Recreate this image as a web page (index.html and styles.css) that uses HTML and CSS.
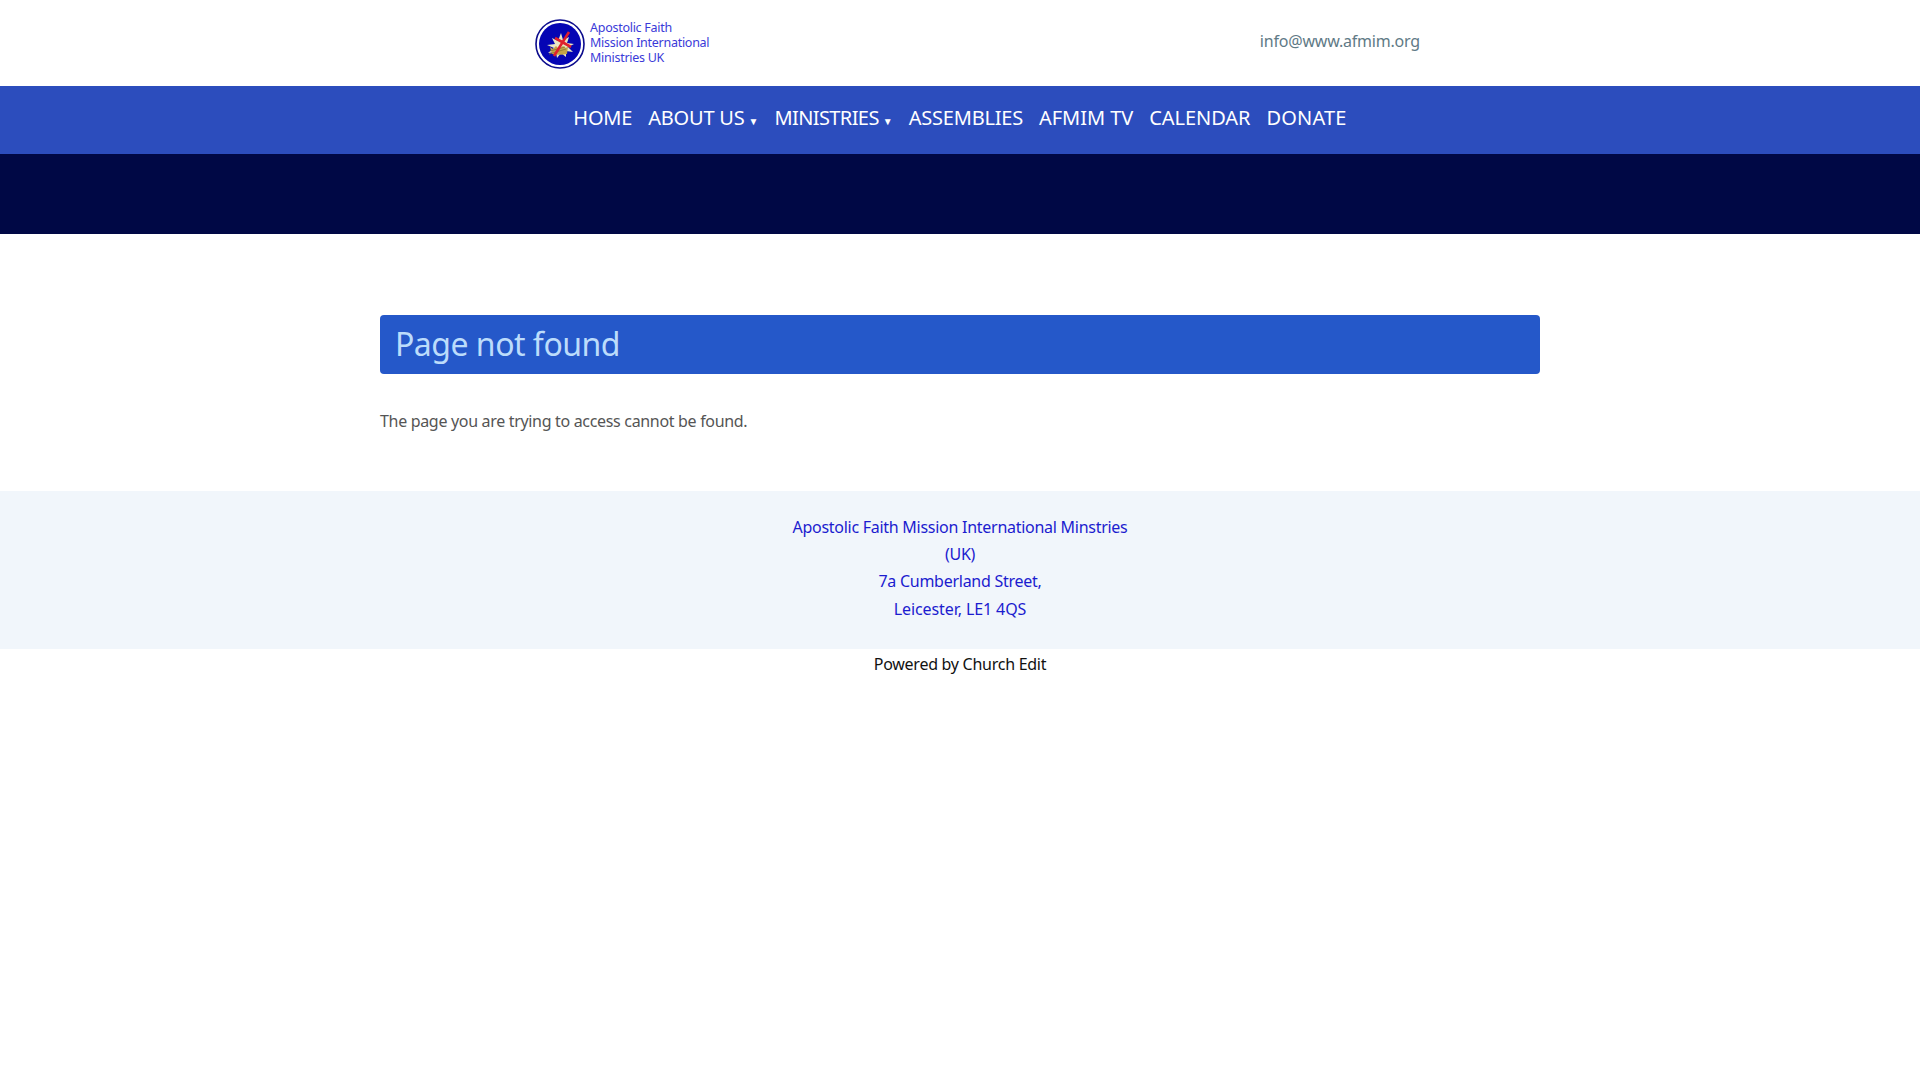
FILE: index.html
```html
<!DOCTYPE html>
<html lang="en">
<head>
<meta charset="utf-8">
<title>Page not found</title>
<link rel="stylesheet" href="styles.css">
</head>
<body>
<header class="top">
  <div class="top-inner">
    <a class="logo" href="#">
      <svg class="logo-mark" width="50" height="50" viewBox="0 0 50 50" aria-hidden="true">
        <circle cx="25" cy="25" r="24" fill="#fff" stroke="#0b0b8c" stroke-width="1.6"/>
        <circle cx="25" cy="25" r="21" fill="#0505b4"/>
        <path d="M26 14l2 7 6-3-2 6 7 1-6 3 5 5-7-1 0 6-5-4-4 5-1-6-8 1 6-5-7-3 8-1-3-6 6 3z" fill="#e9e8c4"/>
        <path d="M15 28l3 2 3-3 3 3 4-3 3 2 2-2-1 8c-4 1-12 1-15 0z" fill="#c4a548"/>
        <path d="M14 35L31 30M15 32l15-4" stroke="#8c7430" stroke-width="0.8" fill="none"/>
        <path d="M19 37L34 13" stroke="#e0202c" stroke-width="2.6" fill="none"/>
        <path d="M20 19L36 28" stroke="#e0202c" stroke-width="2.6" fill="none"/>
      </svg>
      <span class="logo-text">Apostolic Faith<br>Mission International<br>Ministries UK</span>
    </a>
    <a class="mail" href="#">info@www.afmim.org</a>
  </div>
</header>
<nav class="nav">
  <a href="#">HOME</a>
  <a href="#">ABOUT US<span class="caret">▼</span></a>
  <a class="tight" href="#">MINISTRIES<span class="caret">▼</span></a>
  <a href="#">ASSEMBLIES</a>
  <a class="loose" href="#">AFMIM TV</a>
  <a class="loose" href="#">CALENDAR</a>
  <a class="wide" href="#">DONATE</a>
</nav>
<div class="band"></div>
<main class="content">
  <h1 class="title">Page not found</h1>
  <p class="msg">The page you are trying to access cannot be found.</p>
</main>
<footer class="foot">
  <div class="foot-text">Apostolic Faith Mission International Minstries<br>(UK)<br>7a Cumberland Street,<br><span class="foot-last">Leicester, LE1 4QS</span></div>
</footer>
<div class="powered">Powered by Church Edit</div>
</body>
</html>
```
FILE: styles.css
```css
* { box-sizing: border-box; }
html, body { margin: 0; padding: 0; background: #fff; }
body { font-family: "Noto Sans", "Open Sans", sans-serif; font-size: 16px; line-height: 27.2px; color: #555; }
a { color: inherit; text-decoration: none; }
.top { height: 86px; }
.top-inner { width: 900px; margin-left: 520px; display: flex; justify-content: space-between; align-items: flex-start; padding: 0 0 0 15px; }
.logo { display: flex; gap: 5px; margin-top: 19px; }
.logo-mark { display: block; }
.logo-text { font-size: 12.5px; line-height: 15px; color: #3a3ad8; letter-spacing: -0.27px; padding-top: 1px; }
.mail { color: #5f7a86; margin-top: 27px; font-size: 16px; line-height: 27px; letter-spacing: -0.2px; padding-top: 1px; }
.nav { height: 68px; background: #2c4dbd; display: flex; justify-content: center; gap: 16px; padding-top: 18px; color: #fff; font-size: 20px; line-height: 27px; letter-spacing: -0.2px; }
.nav .tight { letter-spacing: -0.6px; }
.nav .loose { letter-spacing: -0.05px; }
.nav .wide { letter-spacing: 0.2px; }
.nav .caret { font-size: 10px; margin-left: 4px; letter-spacing: 0; }
.band { height: 80px; background: #000845; }
.content { width: 1160px; margin: 0 auto; padding: 81px 0 0; height: 257px; }
.title { margin: 0; height: 59px; background: #2558c9; border-radius: 4px; padding: 0 15px; color: #bcdcfb; font-size: 32px; font-weight: 400; line-height: 58px; letter-spacing: -0.5px; }
.msg { margin: 34px 0 0; letter-spacing: -0.32px; }
.foot { height: 158px; background: #f1f6fb; padding-top: 23px; text-align: center; color: #1c1ccf; }
.foot-text { line-height: 27.2px; letter-spacing: -0.27px; }
.foot-last { letter-spacing: -0.1px; }
.powered { text-align: center; color: #111; line-height: 30px; letter-spacing: -0.27px; }
```
